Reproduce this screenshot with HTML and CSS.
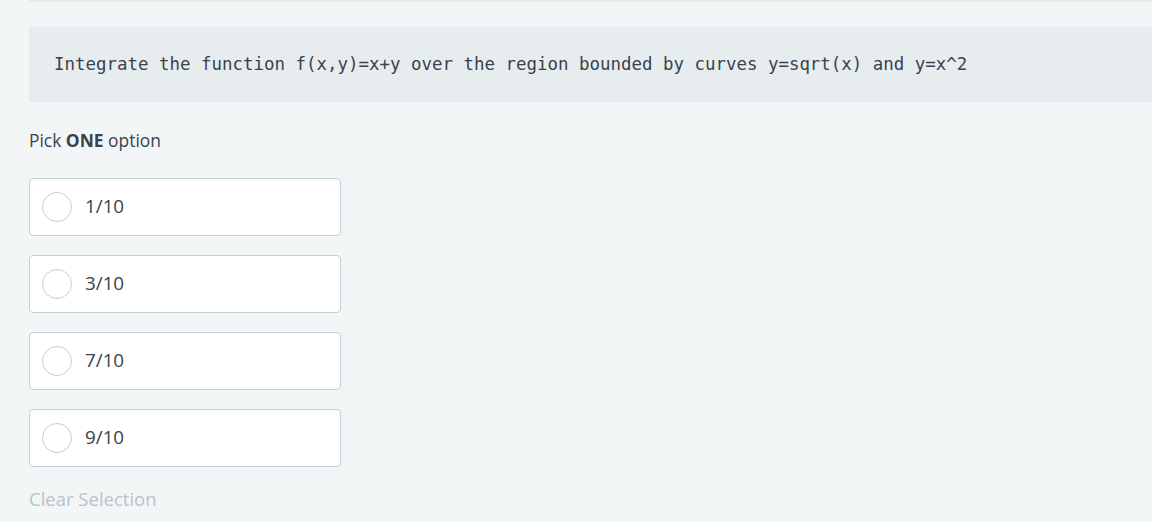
FILE: index.html
```html
<!DOCTYPE html>
<html>
<head>
<meta charset="utf-8">
<link rel="stylesheet" href="styles.css">
</head>
<body>
<div class="page">
  <div class="topbar"></div>
  <div class="question">Integrate the function f(x,y)=x+y over the region bounded by curves y=sqrt(x) and y=x^2</div>
  <div class="pick">Pick <strong>ONE</strong> option</div>
  <div class="options">
    <label class="option"><span class="radio"></span><span class="label">1/10</span></label>
    <label class="option"><span class="radio"></span><span class="label">3/10</span></label>
    <label class="option"><span class="radio"></span><span class="label">7/10</span></label>
    <label class="option"><span class="radio"></span><span class="label">9/10</span></label>
  </div>
  <div class="clear">Clear Selection</div>
</div>
</body>
</html>
```
FILE: styles.css
```css
html, body {
  margin: 0;
  padding: 0;
  background: #f3f6f7;
}
.page {
  padding-left: 29px;
  font-family: "Open Sans", sans-serif;
  color: #39424e;
}
.topbar {
  height: 2px;
  background: #e5eaec;
}
.question {
  margin-top: 25px;
  height: 75px;
  box-sizing: border-box;
  background: #e7edef;
  display: flex;
  align-items: center;
  padding-left: 25px;
  padding-bottom: 2px;
  font-family: "DejaVu Sans Mono", monospace;
  font-size: 17.45px;
  color: #39424e;
  white-space: pre;
}
.pick {
  margin-top: 26px;
  font-size: 17.4px;
  line-height: 24px;
}
.pick strong {
  font-weight: 700;
}
.options {
  margin-top: 26px;
  display: flex;
  flex-direction: column;
  gap: 19px;
}
.option {
  width: 312px;
  height: 58px;
  box-sizing: border-box;
  background: #fff;
  border: 1px solid #c2cfd4;
  border-radius: 4px;
  display: flex;
  align-items: center;
  padding-left: 12px;
}
.radio {
  width: 30px;
  height: 30px;
  box-sizing: border-box;
  border: 1px solid #c2cfd4;
  border-radius: 50%;
  background: #fff;
}
.label {
  margin-left: 13px;
  padding-bottom: 2px;
  font-size: 18.8px;
  color: #39424e;
}
.clear {
  margin-top: 19px;
  font-size: 18.5px;
  line-height: 26px;
  color: #b7c4c9;
}
```
